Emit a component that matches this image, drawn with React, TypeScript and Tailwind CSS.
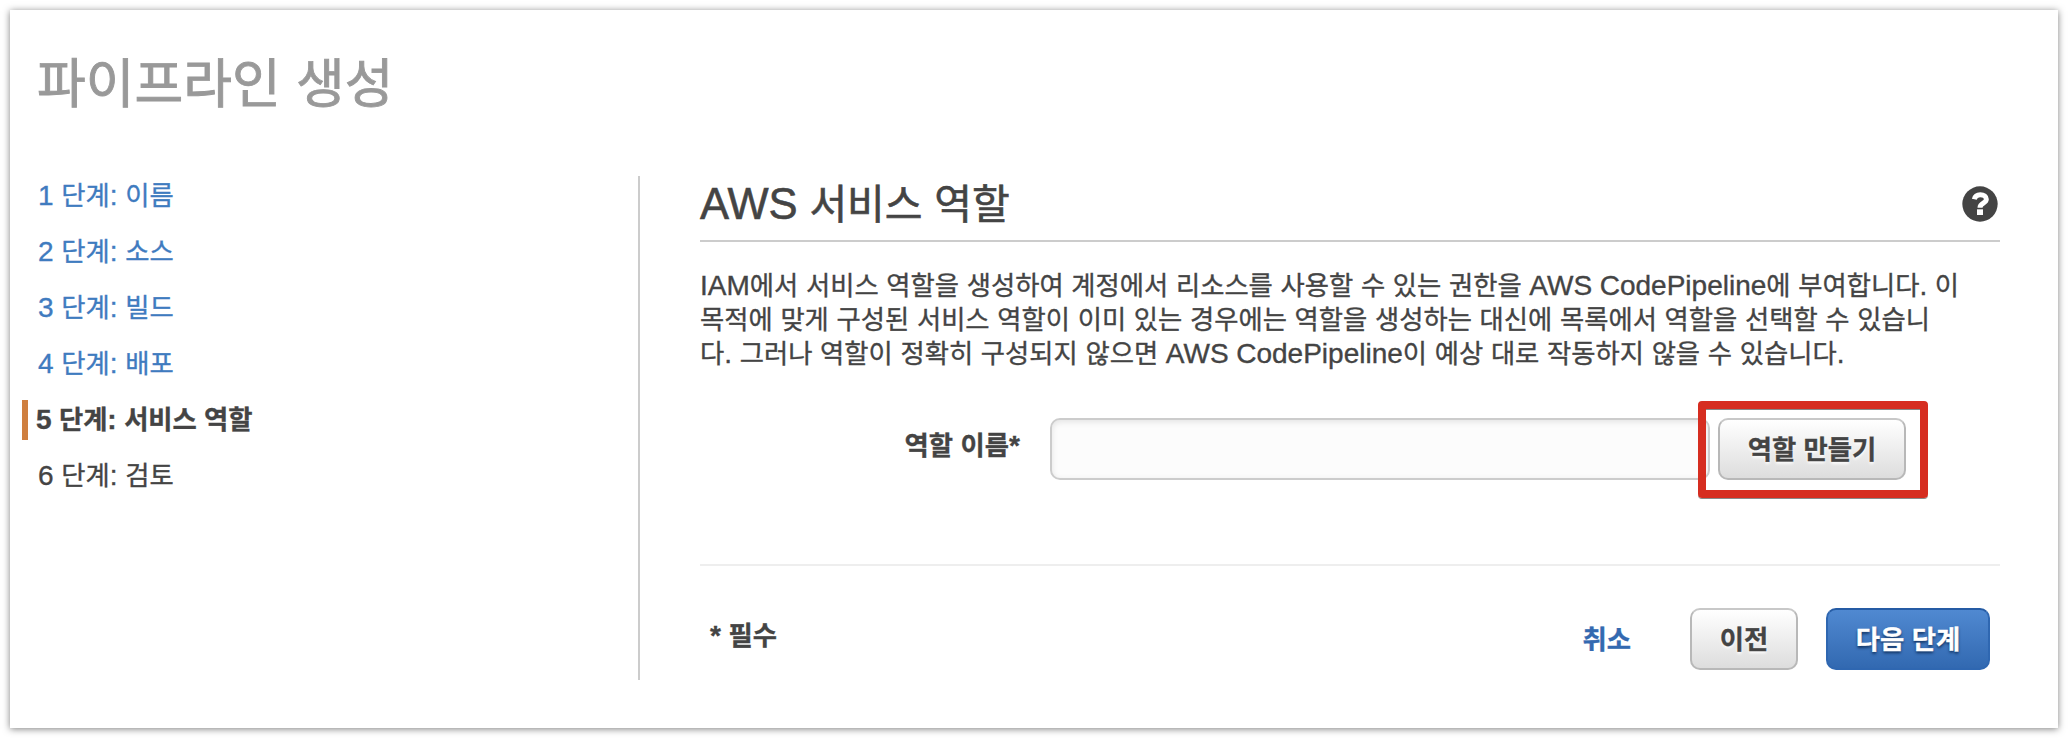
import { Fragment } from "react";

const steps = ["1 단계: 이름", "2 단계: 소스", "3 단계: 빌드", "4 단계: 배포", "5 단계: 서비스 역할", "6 단계: 검토"];
const current = 4;

const description = [
  "IAM에서 서비스 역할을 생성하여 계정에서 리소스를 사용할 수 있는 권한을 AWS CodePipeline에 부여합니다. 이",
  "목적에 맞게 구성된 서비스 역할이 이미 있는 경우에는 역할을 생성하는 대신에 목록에서 역할을 선택할 수 있습니",
  "다. 그러나 역할이 정확히 구성되지 않으면 AWS CodePipeline이 예상 대로 작동하지 않을 수 있습니다.",
];

/** Sets Latin runs slightly larger than the Hangul around them. */
function Mixed({ text }: { text: string }) {
  return (
    <>
      {text.split(/([\x21-\x7e]+)/).map((part, i) =>
        i % 2 ? (
          <span key={i} className="text-[1.063em] leading-none">{part}</span>
        ) : (
          <Fragment key={i}>{part}</Fragment>
        ),
      )}
    </>
  );
}

function HelpIcon() {
  return (
    <svg viewBox="0 0 108 108" className="size-[36px]" aria-hidden="true">
      <circle cx="54" cy="54" r="53" fill="#444" />
      <path d="M37 40C39 30 46 26 55 26C66 26 73 31 73 40C73 52 54 51 54 65" fill="none" stroke="#fff" strokeWidth="15" />
      <rect x="45" y="70" width="18" height="17" fill="#fff" />
    </svg>
  );
}

const greyButton =
  "h-[62px] shrink-0 rounded-[10px] border-2 border-[#b8b8b8] border-t-[#c8c8c8] bg-linear-to-b from-white to-[#dddddd] pt-[3px] font-bold [text-shadow:0_2px_3px_#fff]";

export default function App() {
  return (
    <div className="h-[738px] w-[2068px] overflow-hidden bg-white p-[10px] font-['Liberation_Sans','Noto_Sans_CJK_KR',sans-serif] text-[26.35px] text-[#444] [word-spacing:0.35px] [-webkit-text-stroke:0.35px]">
      <div className="flex h-[718px] w-[2048px] flex-col bg-white shadow-[0_1px_7px_rgba(0,0,0,0.5)]">
        <h1 className="flex h-[166px] items-start whitespace-nowrap pl-[27px] pt-[35px] text-[53px] leading-[80px] text-[#999] [-webkit-text-stroke:0.9px]">
          파이프라인 생성
        </h1>
        <div className="flex h-[504px]">
          <nav className="flex w-[630px] shrink-0 flex-col gap-[16px] border-r-2 border-[#ccc] pl-[12px]">
            {steps.map((step, i) => (
              <div
                key={step}
                className={
                  "flex h-[40px] items-center whitespace-pre border-l-[6px] pt-[2px] " +
                  (i === current
                    ? "border-[#cf7f40] pl-[8px] font-bold tracking-[-0.1px]"
                    : i < current
                      ? "border-transparent pl-[10px] text-[#3f7bbf]"
                      : "border-transparent pl-[10px]")
                }
              >
                <span><Mixed text={step} /></span>
              </div>
            ))}
          </nav>
          <main className="ml-[60px] flex w-[1300px] flex-col">
            <header className="flex h-[66px] items-center justify-between border-b-2 border-[#ccc] pb-[8px] pr-[2px]">
              <h2 className="whitespace-nowrap pt-px text-[41px] leading-[56px] [-webkit-text-stroke:0.6px]"><Mixed text="AWS 서비스 역할" /></h2>
              <HelpIcon />
            </header>
            <div className="mt-[27px] whitespace-nowrap">
              {description.map((line) => (
                <p key={line} className="h-[34px] leading-[34px]"><Mixed text={line} /></p>
              ))}
            </div>
            <div className="mt-[47px] flex h-[62px]">
              <label htmlFor="role" className="w-[320px] pt-[8px] text-right font-bold leading-[40px]">
                <Mixed text="역할 이름*" />
              </label>
              <input
                id="role"
                className="ml-[30px] h-[62px] w-[660px] shrink-0 rounded-[10px] border-2 border-[#ccc] bg-[#fcfcfc] px-4 shadow-[inset_0_2px_6px_rgba(0,0,0,0.1)] outline-none"
              />
              <div className="relative ml-[8px]">
                <button className={greyButton + " w-[188px]"}>역할 만들기</button>
                <div className="pointer-events-none absolute -left-[20px] -top-[17px] h-[97px] w-[230px] rounded-[4px] border-8 border-[#d62d20] shadow-[0_1px_0_#888]">
                  <div className="h-px bg-[#888]" />
                </div>
              </div>
            </div>
            <footer className="mt-[84px] flex border-t-2 border-[#eee] pl-[10px] pr-[10px] pt-[42px]">
              <span className="flex-1 pt-[8px] font-bold leading-[40px]"><Mixed text="* 필수" /></span>
              <a className="mr-[59px] pt-[12px] font-bold leading-[40px] text-[#3369b0]">취소</a>
              <button className={greyButton + " w-[108px]"}>이전</button>
              <button className="ml-[28px] h-[62px] w-[164px] shrink-0 rounded-[10px] border-2 border-[#2f67b1] border-t-[#255ba4] bg-linear-to-b from-[#5089d1] to-[#3269b1] pt-[3px] font-bold text-white [text-shadow:0_2px_3px_#0f2f5c]">
                다음 단계
              </button>
            </footer>
          </main>
        </div>
      </div>
    </div>
  );
}
